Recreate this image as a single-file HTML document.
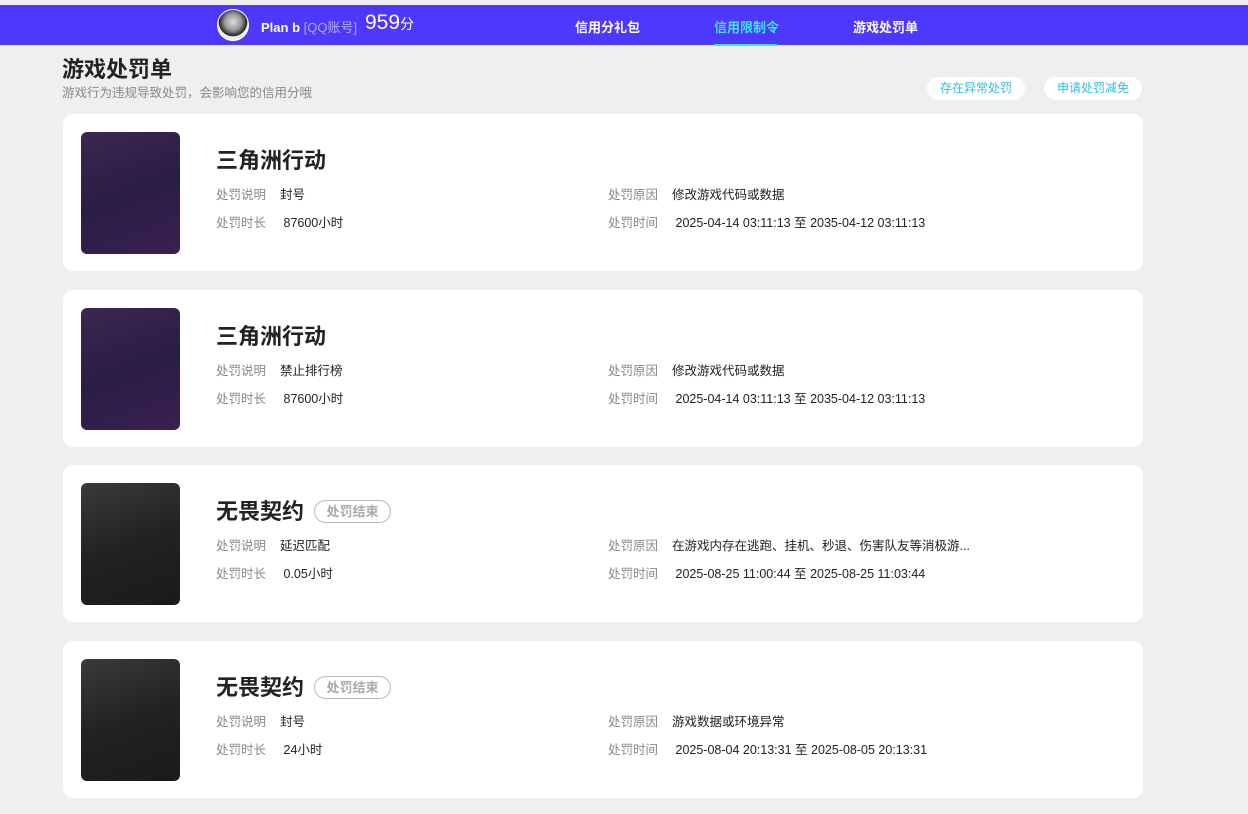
<!DOCTYPE html>
<html><head><meta charset="utf-8"><style>
*{margin:0;padding:0;box-sizing:border-box}
body{width:1248px;height:814px;background:#efefef;font-family:"Liberation Sans","Noto Sans CJK SC",sans-serif;position:relative;overflow:hidden}
.top{position:absolute;left:0;top:5px;width:1248px;height:40px;background:#4f38fe}
.av{position:absolute;left:217px;top:4px;width:32px;height:32px;border-radius:50%;background:radial-gradient(circle at 50% 40%,#ddd 0,#999 35%,#222 60%,#eee 62%);border:1px solid #fff}
.nm{position:absolute;left:261px;top:12px;color:#fff;font-size:13px;font-weight:bold}
.nm span{color:#b4a8ff;font-weight:normal}
.sc{position:absolute;left:365px;top:6px;color:#fff;font-size:21px}
.sc small{font-size:14px}
.nav{position:absolute;top:12px;color:#fff;font-size:13px;font-weight:bold}
.act{color:#3ce6f0}
.ul{position:absolute;left:714px;top:39px;width:63px;height:2px;background:#3ce6f0}
h1{position:absolute;left:62px;top:52px;font-size:22px;color:#222}
.sub{position:absolute;left:62px;top:82px;font-size:12.5px;color:#888}
.btn{position:absolute;top:77px;width:98px;height:23px;border-radius:12px;background:#fff;color:#3ab8e0;font-size:12px;text-align:center;line-height:23px}
.card{position:absolute;left:63px;width:1080px;height:157px;background:#fff;border-radius:10px}
.img{position:absolute;left:18px;top:18px;width:99px;height:122px;border-radius:6px}
.p{background:linear-gradient(160deg,#3d2750,#2a1d45 50%,#3a2050)}
.g{background:linear-gradient(160deg,#3a3a3a,#222 50%,#1a1a1a)}
.t{position:absolute;left:153px;top:29px;font-size:22px;font-weight:bold;color:#222}
.tag{display:inline-block;vertical-align:middle;margin-left:10px;margin-top:-4px;width:77px;height:23px;border:1px solid #bbb;border-radius:12px;color:#aaa;font-size:13px;text-align:center;line-height:21px}
.r{position:absolute;font-size:12.5px;color:#222;white-space:nowrap}
.r b{font-weight:normal;color:#888;margin-right:14px}
</style></head><body>
<div class="top">
<div class="av"></div>
<div class="nm">Plan b <span>[QQ账号]</span></div>
<div class="sc">959<small>分</small></div>
<div class="nav" style="left:575px">信用分礼包</div>
<div class="nav act" style="left:714px">信用限制令</div>
<div class="nav" style="left:853px">游戏处罚单</div>
<div class="ul"></div>
</div>
<h1>游戏处罚单</h1>
<div class="sub">游戏行为违规导致处罚，会影响您的信用分哦</div>
<div class="btn" style="left:927px">存在异常处罚</div>
<div class="btn" style="left:1044px">申请处罚减免</div>

<div class="card" style="top:114px"><div class="img p"></div><div class="t">三角洲行动</div>
<div class="r" style="left:153px;top:70px"><b>处罚说明</b>封号</div>
<div class="r" style="left:153px;top:98px"><b>处罚时长</b> 87600小时</div>
<div class="r" style="left:545px;top:70px"><b>处罚原因</b>修改游戏代码或数据</div>
<div class="r" style="left:545px;top:98px"><b>处罚时间</b> 2025-04-14 03:11:13 至 2035-04-12 03:11:13</div></div>

<div class="card" style="top:290px"><div class="img p"></div><div class="t">三角洲行动</div>
<div class="r" style="left:153px;top:70px"><b>处罚说明</b>禁止排行榜</div>
<div class="r" style="left:153px;top:98px"><b>处罚时长</b> 87600小时</div>
<div class="r" style="left:545px;top:70px"><b>处罚原因</b>修改游戏代码或数据</div>
<div class="r" style="left:545px;top:98px"><b>处罚时间</b> 2025-04-14 03:11:13 至 2035-04-12 03:11:13</div></div>

<div class="card" style="top:465px"><div class="img g"></div><div class="t">无畏契约<span class="tag">处罚结束</span></div>
<div class="r" style="left:153px;top:70px"><b>处罚说明</b>延迟匹配</div>
<div class="r" style="left:153px;top:98px"><b>处罚时长</b> 0.05小时</div>
<div class="r" style="left:545px;top:70px"><b>处罚原因</b>在游戏内存在逃跑、挂机、秒退、伤害队友等消极游...</div>
<div class="r" style="left:545px;top:98px"><b>处罚时间</b> 2025-08-25 11:00:44 至 2025-08-25 11:03:44</div></div>

<div class="card" style="top:641px"><div class="img g"></div><div class="t">无畏契约<span class="tag">处罚结束</span></div>
<div class="r" style="left:153px;top:70px"><b>处罚说明</b>封号</div>
<div class="r" style="left:153px;top:98px"><b>处罚时长</b> 24小时</div>
<div class="r" style="left:545px;top:70px"><b>处罚原因</b>游戏数据或环境异常</div>
<div class="r" style="left:545px;top:98px"><b>处罚时间</b> 2025-08-04 20:13:31 至 2025-08-05 20:13:31</div></div>
</body></html>
